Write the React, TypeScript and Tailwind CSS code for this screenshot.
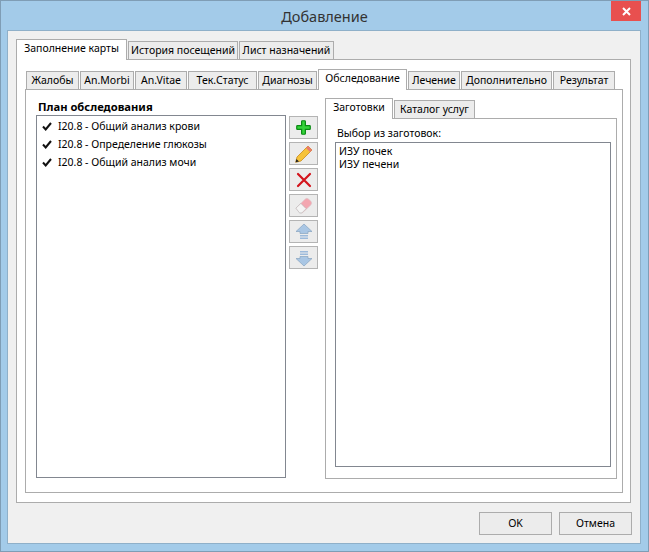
const outerTabs = [
  { label: "Заполнение карты", w: "w-[111px]", active: true },
  { label: "История посещений", w: "w-[110px]" },
  { label: "Лист назначений", w: "w-[95px]" },
];

const innerTabs = [
  { label: "Жалобы", w: "w-[53px]" },
  { label: "An.Morbi", w: "w-[54px]" },
  { label: "An.Vitae", w: "w-[52px]" },
  { label: "Тек.Статус", w: "w-[69px]" },
  { label: "Диагнозы", w: "w-[59px]" },
  { label: "Обследование", w: "w-[89px]", active: true },
  { label: "Лечение", w: "w-[52px]" },
  { label: "Дополнительно", w: "w-[91px]" },
  { label: "Результат", w: "w-[62px]" },
];

const planItems = [
  "I20.8 - Общий анализ крови",
  "I20.8 - Определение глюкозы",
  "I20.8 - Общий анализ мочи",
];

function Tab({ label, w, active }: { label: string; w: string; active?: boolean }) {
  if (active) {
    return (
      <div className={`${w} h-[21px] -mb-px z-10 shrink-0 border border-b-0 border-[#acacac] bg-white whitespace-nowrap flex items-start justify-center pt-[3px]`}>
        {label}
      </div>
    );
  }
  return (
    <div className={`${w} h-[18px] shrink-0 border border-b-0 border-[#acacac] bg-[#ececec] whitespace-nowrap flex items-center justify-center`}>
      {label}
    </div>
  );
}

function PlusIcon() {
  return (
    <svg width="15" height="15" viewBox="0 0 16 16">
      <path d="M6 1.500q0-.7.700-.7h2.600q.7 0 .7.700V6h4.500q.7 0 .7.700v2.600q0 .7-.7.700H10v4.500q0 .7-.7.700H6.700q-.7 0-.7-.7V10H1.500q-.7 0-.7-.7V6.700q0-.7.700-.7H6z" fill="#35d43a" stroke="#0b8a14" strokeWidth="1.300" />
    </svg>
  );
}

function PencilIcon() {
  return (
    <svg width="20" height="20" viewBox="0 0 18 18">
      <path d="M1.500 16.500l1.200-4.800L12.600 1.800l3.600 3.600-9.900 9.900z" fill="#f6c33a" stroke="#c98a1a" strokeWidth="0.700" />
      <path d="M12.600 1.800l3.600 3.600-1.800 1.800-3.600-3.600z" fill="#ea7a72" />
      <path d="M1.500 16.500l.7-3 2.300 2.300z" fill="#222" />
    </svg>
  );
}

function CrossIcon() {
  return (
    <svg width="18" height="18" viewBox="0 0 18 18">
      <path d="M3 3l12 12M15 3L3 15" stroke="#d3141c" strokeWidth="2.200" strokeLinecap="round" />
    </svg>
  );
}

function EraserIcon() {
  return (
    <svg width="19" height="19" viewBox="0 0 18 18">
      <path d="M1.800 11.500L10.500 3a2.500 2.500 0 0 1 3.500 0l2 2a2.500 2.500 0 0 1 0 3.500L7.800 16H5.500z" fill="#f3a6b0" stroke="#dcc8cb" strokeWidth="0.600" />
      <path d="M1.800 11.500L6.500 7l5 5-4 4H5.200z" fill="#f4f4f4" stroke="#b8b8b8" strokeWidth="0.600" />
    </svg>
  );
}

function UpIcon() {
  return (
    <svg width="18" height="18" viewBox="0 0 18 18">
      <path d="M9 1l8 7.500h-4v2H5v-2H1z" fill="#a9c6e4" stroke="#87a3c0" strokeWidth="0.700" />
      <path d="M5 12h8v1.500H5zM5 14.500h8V16H5z" fill="#9cbadb" />
    </svg>
  );
}

function DownIcon() {
  return (
    <svg width="18" height="18" viewBox="0 0 18 18">
      <path d="M5 2h8v1.500H5zM5 4.500h8V6H5z" fill="#9cbadb" />
      <path d="M9 17l8-7.500h-4v-2H5v2H1z" fill="#a9c6e4" stroke="#87a3c0" strokeWidth="0.700" />
    </svg>
  );
}

function ToolButton({ children }: { children: React.ReactNode }) {
  return (
    <div className="w-[29px] h-[23px] border border-[#b4b4b4] bg-[#ececec] flex items-center justify-center">
      {children}
    </div>
  );
}

export default function App() {
  return (
    <div className="w-[649px] h-[552px] overflow-hidden bg-[#a3cbe9] border border-[#7f9db5] text-[10.5px] leading-none text-black font-['Noto_Sans','Liberation_Sans',sans-serif] flex flex-col">
      {/* Title bar */}
      <div className="h-[29px] shrink-0 flex items-start relative">
        <div className="flex-1 text-center text-[14.5px] text-[#333] pt-[8px]">Добавление</div>
        <div className="absolute right-[7px] top-0 w-[30px] h-[20px] bg-[#e8504f] flex items-center justify-center">
          <svg width="9" height="9" viewBox="0 0 9 9">
            <path d="M1 1l7 7M8 1L1 8" stroke="#fff" strokeWidth="2" />
          </svg>
        </div>
      </div>

      {/* Client area */}
      <div className="ml-[6px] w-[634px] h-[514px] border border-[#8fb0c9] bg-[#f0f0f0] flex flex-col pl-[8px] pt-[8px]">
        <div className="flex gap-[1px] items-end w-[615px]">
          {outerTabs.map((t) => (
            <Tab key={t.label} {...t} />
          ))}
        </div>

        <div className="w-[615px] h-[444px] border border-[#acacac] bg-white pl-[8px] pt-[9px] flex flex-col">
          <div className="flex items-end gap-[1px] pl-[1px]">
            {innerTabs.map((t) => (
              <Tab key={t.label} {...t} />
            ))}
          </div>

          <div className="w-[598px] h-[404px] border border-[#acacac] bg-white flex pl-[10px]">
            {/* Plan column */}
            <div className="w-[250px] shrink-0 flex flex-col">
              <div className="h-[25px] pl-[2px] pt-[11px] font-bold text-[11.2px]">План обследования</div>
              <div className="h-[363px] border border-[#828790] pt-[1px] pl-[5px]">
                {planItems.map((item) => (
                  <div key={item} className="h-[18px] flex items-center gap-[6px]">
                    <svg width="10" height="9" viewBox="0 0 10 9">
                      <path d="M1 4.500l2.700 3L9 1" fill="none" stroke="#111" strokeWidth="2" />
                    </svg>
                    <span>{item}</span>
                  </div>
                ))}
              </div>
            </div>

            {/* Toolbar */}
            <div className="w-[29px] ml-[3px] pt-[26px] flex flex-col gap-[3px] shrink-0">
              <ToolButton><PlusIcon /></ToolButton>
              <ToolButton><PencilIcon /></ToolButton>
              <ToolButton><CrossIcon /></ToolButton>
              <ToolButton><EraserIcon /></ToolButton>
              <ToolButton><UpIcon /></ToolButton>
              <ToolButton><DownIcon /></ToolButton>
            </div>

            {/* Right tabs */}
            <div className="ml-[7px] w-[292px] flex flex-col pt-[8px]">
              <div className="flex items-end gap-[1px]">
                <Tab label="Заготовки" w="w-[68px]" active />
                <Tab label="Каталог услуг" w="w-[81px]" />
              </div>
              <div className="h-[361px] border border-[#acacac] pl-[9px] pt-[9px] flex flex-col">
                <div className="h-[14px] pl-[2px]">Выбор из заготовок:</div>
                <div className="w-[276px] h-[325px] border border-[#828790] pt-[2px] pl-[3px] leading-[13px]">
                  <div>ИЗУ почек</div>
                  <div>ИЗУ печени</div>
                </div>
              </div>
            </div>
          </div>
        </div>

        {/* Dialog buttons */}
        <div className="flex justify-end gap-[7px] pt-[9px] pr-[8px]">
          <div className="w-[73px] h-[23px] border border-[#acacac] bg-[#ececec] flex items-center justify-center">OK</div>
          <div className="w-[73px] h-[23px] border border-[#acacac] bg-[#ececec] flex items-center justify-center">Отмена</div>
        </div>
      </div>
    </div>
  );
}
